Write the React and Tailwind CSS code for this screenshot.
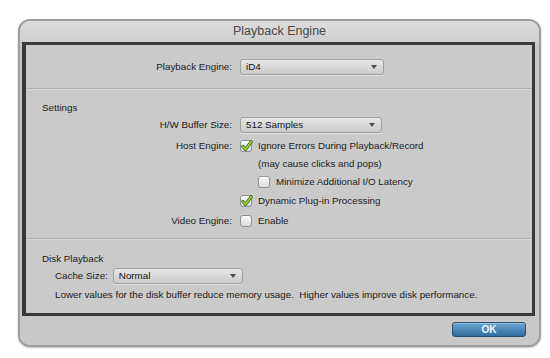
import React from "react";

function Check({ checked }) {
  return (
    <span className="relative w-[12px] h-[12px] shrink-0 rounded-[3px] border border-[#8f8f8f] bg-linear-to-b from-[#fbfbfb] to-[#dcdcdc] shadow-[inset_0_1px_0_#ffffff]">
      {checked && (
        <svg viewBox="0 0 14 14" className="absolute left-[-1px] top-[-2px] w-[14px] h-[14px]">
          <path d="M2.8 7.4 L5.6 10.4 L11.2 2.8" fill="none" stroke="#3a5a18" strokeWidth="3.2" strokeLinecap="round" strokeLinejoin="round" />
          <path d="M2.8 7.4 L5.6 10.4 L11.2 2.8" fill="none" stroke="#97cc3c" strokeWidth="1.9" strokeLinecap="round" strokeLinejoin="round" />
        </svg>
      )}
    </span>
  );
}

function Select({ value, className }) {
  return (
    <div
      className={
        "h-[16px] rounded-[3px] border border-[#a0a0a0] bg-linear-to-b from-[#e6e6e6] to-[#cbcbcb] flex items-center justify-between pl-[5px] pr-[6px] shadow-[0_1px_0_rgba(255,255,255,0.45)] " +
        className
      }
    >
      <span className="text-[#141414]">{value}</span>
      <svg width="6" height="4" viewBox="0 0 6 4">
        <path d="M0 0h6L3 4z" fill="#4a4a4a" />
      </svg>
    </div>
  );
}

function Sep() {
  return (
    <div className="flex flex-col">
      <div className="h-px bg-[#b2b2b2]" />
      <div className="h-px bg-[#d8d8d8]" />
    </div>
  );
}

export default function App() {
  return (
    <div
      className="w-[550px] h-[358px] bg-white pt-[19px] pl-[18px]"
      style={{ fontFamily: '"Liberation Sans", Arial, sans-serif' }}
    >
      <div className="w-[523px] h-[328px] rounded-[12px] border-2 border-[#9c9c9c] bg-[#c9c9c9] flex flex-col overflow-hidden shadow-[0_1px_2px_rgba(0,0,0,0.25)]">
        {/* title bar */}
        <div className="h-[21px] shrink-0 bg-linear-to-b from-[#dcdcdc] to-[#cfcfcf] flex items-center justify-center">
          <span className="text-[12.5px] text-[#4a4a4a] leading-none">Playback Engine</span>
        </div>

        {/* content panel */}
        <div className="h-[274px] shrink-0 ml-[2px] mr-[4px] border-[3px] border-l-4 border-[#393939] bg-[#cacaca] flex flex-col text-[9.8px] text-[#1c1c1c] leading-none">
          {/* section 1 */}
          <div className="h-[43px] pt-[14px]">
            <div className="flex items-center h-[16px]">
              <div className="w-[214px] pr-[8px] text-right">Playback Engine:</div>
              <Select value="iD4" className="w-[144px]" />
            </div>
          </div>
          <Sep />

          {/* section 2 */}
          <div className="h-[148px] pt-[10px] flex flex-col">
            <div className="h-[16px] flex items-center pl-[16px]">Settings</div>
            <div className="h-[18px] flex items-center">
              <div className="w-[214px] pr-[8px] text-right">H/W Buffer Size:</div>
              <Select value="512 Samples" className="w-[142px]" />
            </div>
            <div className="h-[24px] flex items-center">
              <div className="w-[214px] pr-[8px] text-right">Host Engine:</div>
              <Check checked />
              <span className="ml-[6px]">Ignore Errors During Playback/Record</span>
            </div>
            <div className="h-[12px] flex items-center pl-[232px]">(may cause clicks and pops)</div>
            <div className="h-[24px] flex items-center pl-[232px]">
              <Check />
              <span className="ml-[6px]">Minimize Additional I/O Latency</span>
            </div>
            <div className="h-[14px] flex items-center pl-[214px]">
              <Check checked />
              <span className="ml-[6px]">Dynamic Plug-in Processing</span>
            </div>
            <div className="h-[26px] flex items-center">
              <div className="w-[214px] pr-[8px] text-right">Video Engine:</div>
              <Check />
              <span className="ml-[6px]">Enable</span>
            </div>
          </div>
          <Sep />

          {/* section 3 */}
          <div className="h-[73px] pt-[11px] flex flex-col">
            <div className="h-[16px] flex items-center pl-[16px]">Disk Playback</div>
            <div className="h-[18px] flex items-center pl-[29px]">
              <span className="mr-[5px]">Cache Size:</span>
              <Select value="Normal" className="w-[130px]" />
            </div>
            <div className="h-[20px] flex items-center pl-[29px]">
              Lower values for the disk buffer reduce memory usage.&nbsp; Higher values improve disk performance.
            </div>
          </div>
        </div>

        {/* footer */}
        <div className="flex-1 flex justify-end items-start pt-[6px] pr-[13px] bg-[#c8c8c8]">
          <div className="w-[74px] h-[15px] rounded-[3px] border border-[#284f6d] bg-linear-to-b from-[#6aa6d2] to-[#2f6d9c] flex items-center justify-center shadow-[inset_0_1px_0_rgba(255,255,255,0.35)]">
            <span className="text-[10px] font-bold text-[#eef5fb] leading-none">OK</span>
          </div>
        </div>
      </div>
    </div>
  );
}
